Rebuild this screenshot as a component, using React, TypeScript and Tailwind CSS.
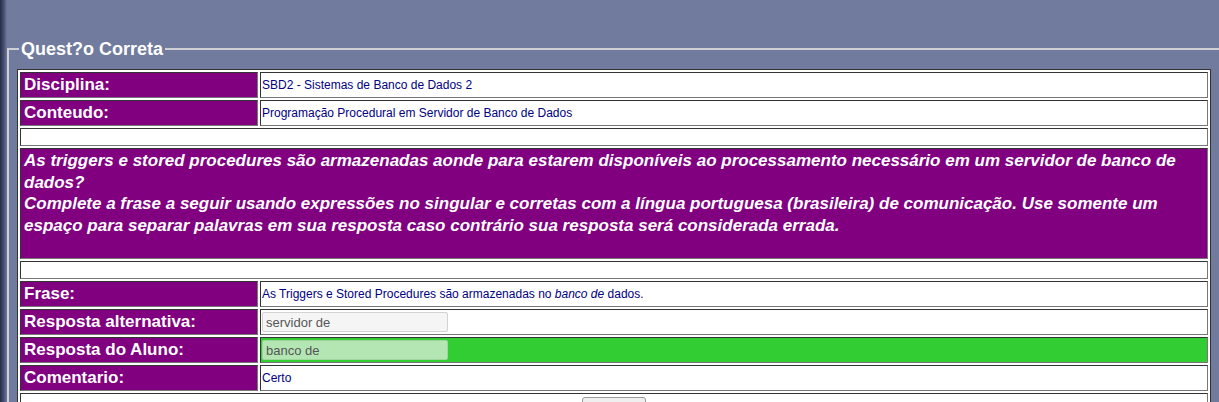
import React from "react";

const labelCell =
  "bg-[#800080] text-white font-bold text-[17px] border border-t-[#333] border-l-[#333] border-b-[#777] border-r-[#777] p-0 align-middle";
const valueCell =
  "text-[12px] text-[#000080] border border-t-[#333] border-l-[#333] border-b-[#777] border-r-[#777] p-0 align-middle";

const rows = [
  { label: "Disciplina:", value: "SBD2 - Sistemas de Banco de Dados 2" },
  { label: "Conteudo:", value: "Programação Procedural em Servidor de Banco de Dados" },
];

function Blank() {
  return (
    <tr>
      <td colSpan={2} className={valueCell}>
        <div className="h-[16px]" />
      </td>
    </tr>
  );
}

function Row({ label, children, green }: { label: string; children: React.ReactNode; green?: boolean }) {
  return (
    <tr>
      <td className={labelCell + " w-[238px]"}>
        <div className="h-[24px] flex items-center pl-[3px]">{label}</div>
      </td>
      <td className={valueCell + (green ? " bg-[#32cd32]" : " bg-white")}>
        <div className="h-[24px] flex items-center pl-[1px]">{children}</div>
      </td>
    </tr>
  );
}

export default function App() {
  return (
    <div
      className="w-[1219px] h-[402px] overflow-hidden bg-[#717b9d] flex"
      style={{ fontFamily: '"Liberation Sans", Arial, sans-serif' }}
    >
      {/* left frame shadow */}
      <div className="w-[7px] shrink-0 bg-gradient-to-r from-[#262c48] via-[#454d6e] to-[#6f799b]" />

      <div className="flex-1 pt-[39px]">
        <fieldset className="border-t-2 border-l-2 border-r-0 border-b-0 border-[#cfd0d6] pl-[9px] pt-[10px] m-0 w-[1230px]">
          <legend className="ml-[1px] px-[2px] text-white font-bold text-[18px] leading-[20px]">
            Quest?o Correta
          </legend>

          <table className="border-separate border-spacing-[2px] border border-[#333] bg-white w-[1194px] -ml-[1px]">
            <tbody>
              {rows.map((r) => (
                <Row key={r.label} label={r.label}>
                  {r.value}
                </Row>
              ))}
              <Blank />
              <tr>
                <td colSpan={2} className={labelCell}>
                  <div className="h-[109px] pl-[3px] pt-[1px] pr-[10px] italic leading-[21.5px]">
                    As triggers e stored procedures são armazenadas aonde para estarem disponíveis ao processamento necessário em um servidor de banco de dados?
                    <br />
                    Complete a frase a seguir usando expressões no singular e corretas com a língua portuguesa (brasileira) de comunicação. Use somente um espaço para separar palavras em sua resposta caso contrário sua resposta será considerada errada.
                  </div>
                </td>
              </tr>
              <Blank />
              <Row label="Frase:">
                <span>
                  As Triggers e Stored Procedures são armazenadas no <i>banco de</i> dados.
                </span>
              </Row>
              <Row label="Resposta alternativa:">
                <input
                  readOnly
                  value="servidor de"
                  className="w-[186px] h-[20px] bg-[#f5f5f5] border border-[#d3d3d3] rounded-[2px] px-[3px] text-[13px] text-[#555]"
                />
              </Row>
              <Row label="Resposta do Aluno:" green>
                <input
                  readOnly
                  value="banco de"
                  className="w-[186px] h-[20px] bg-[#b4e6b4] border border-[#9ed69e] rounded-[2px] px-[3px] text-[13px] text-[#555]"
                />
              </Row>
              <Row label="Comentario:">Certo</Row>
              <tr>
                <td colSpan={2} className={valueCell + " bg-white"}>
                  <div className="h-[30px] flex justify-center pt-[3px]">
                    <button aria-label="Voltar" className="w-[64px] h-[24px] bg-[#efefef] border border-[#999] rounded-[3px]" />
                  </div>
                </td>
              </tr>
            </tbody>
          </table>
        </fieldset>
      </div>
    </div>
  );
}
